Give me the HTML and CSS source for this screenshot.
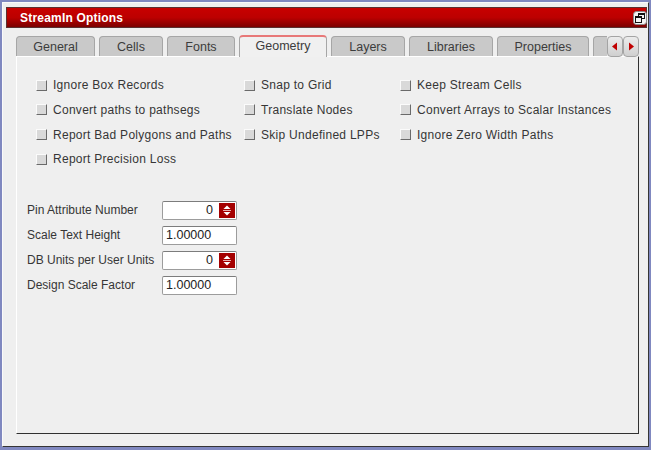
FILE: index.html
```html
<!DOCTYPE html>
<html>
<head>
<meta charset="utf-8">
<link rel="stylesheet" href="styles.css">
</head>
<body>
<div class="window">
  <div class="titlebar">
    <span class="title">StreamIn Options</span>
    <span class="restore">
      <svg width="14" height="14" viewBox="0 0 14 14">
        <rect x="0.5" y="0.5" width="13" height="13" rx="3" fill="#f4f4f4" stroke="#8a8a8a"/>
        <rect x="5.5" y="2.5" width="6" height="5" fill="none" stroke="#111"/>
        <rect x="5" y="2" width="7" height="2" fill="#111"/>
        <rect x="2.5" y="5.5" width="6" height="6" fill="#f4f4f4" stroke="#111"/>
        <rect x="2" y="5" width="7" height="2" fill="#111"/>
      </svg>
    </span>
  </div>
  <div class="content">
    <div class="tabs">
      <div class="tab t1">General</div>
      <div class="tab t2">Cells</div>
      <div class="tab t3">Fonts</div>
      <div class="tab t4 active">Geometry</div>
      <div class="tab t5">Layers</div>
      <div class="tab t6">Libraries</div>
      <div class="tab t7">Properties</div>
      <div class="tab partial"></div>
      <div class="arrows">
        <div class="arrow">
          <svg width="14" height="19" viewBox="0 0 14 19"><polygon points="4,9.5 9,5.5 9,13.5" fill="#c00000"/></svg>
        </div>
        <div class="arrow">
          <svg width="14" height="19" viewBox="0 0 14 19"><polygon points="10,9.5 5,5.5 5,13.5" fill="#c00000"/></svg>
        </div>
      </div>
    </div>
    <div class="panel">
      <div class="checks">
        <label class="check"><span class="box"></span>Ignore Box Records</label>
        <label class="check"><span class="box"></span>Snap to Grid</label>
        <label class="check"><span class="box"></span>Keep Stream Cells</label>
        <label class="check"><span class="box"></span>Convert paths to pathsegs</label>
        <label class="check"><span class="box"></span>Translate Nodes</label>
        <label class="check"><span class="box"></span>Convert Arrays to Scalar Instances</label>
        <label class="check"><span class="box"></span>Report Bad Polygons and Paths</label>
        <label class="check"><span class="box"></span>Skip Undefined LPPs</label>
        <label class="check"><span class="box"></span>Ignore Zero Width Paths</label>
        <label class="check"><span class="box"></span>Report Precision Loss</label>
      </div>
      <div class="fields">
        <span class="label">Pin Attribute Number</span>
        <div class="input spin"><span class="val">0</span><span class="spinner"><svg width="16" height="15" viewBox="0 0 16 15"><rect width="16" height="15" fill="#a40000"/><polygon points="4.5,6 11.5,6 8,2.5" fill="#fff"/><line x1="4" y1="7.5" x2="12" y2="7.5" stroke="#e8b0b0" stroke-width="1"/><polygon points="4.5,9 11.5,9 8,12.5" fill="#fff"/></svg></span></div>
        <span class="label">Scale Text Height</span>
        <div class="input">1.00000</div>
        <span class="label">DB Units per User Units</span>
        <div class="input spin"><span class="val">0</span><span class="spinner"><svg width="16" height="15" viewBox="0 0 16 15"><rect width="16" height="15" fill="#a40000"/><polygon points="4.5,6 11.5,6 8,2.5" fill="#fff"/><line x1="4" y1="7.5" x2="12" y2="7.5" stroke="#e8b0b0" stroke-width="1"/><polygon points="4.5,9 11.5,9 8,12.5" fill="#fff"/></svg></span></div>
        <span class="label">Design Scale Factor</span>
        <div class="input">1.00000</div>
      </div>
    </div>
  </div>
</div>
</body>
</html>
```
FILE: styles.css
```css
html, body {
  margin: 0;
  padding: 0;
}
body {
  background: #8088c0;
  width: 651px;
  height: 450px;
  overflow: hidden;
  font-family: "Liberation Sans", Arial, sans-serif;
  font-size: 12px;
  color: #363636;
}
.window {
  margin: 2px 0 0 2px;
  width: 647px;
  height: 445px;
  box-sizing: border-box;
  background: #efefef;
  border: 1px solid;
  border-color: #fafafa #353535 #353535 #fafafa;
  padding: 4px 1px 0 3px;
  display: flex;
  flex-direction: column;
}
.titlebar {
  height: 21px;
  box-sizing: border-box;
  border: 1px solid #5a3030;
  background: linear-gradient(#c80000 0%, #bc0000 50%, #7c0000 100%);
  display: flex;
  align-items: center;
  justify-content: space-between;
  padding: 0 0 0 13px;
}
.title {
  color: #fff;
  font-weight: bold;
  font-size: 12px;
  letter-spacing: 0.2px;
}
.restore {
  display: flex;
  margin-right: -1px;
}
.content {
  padding: 8px 0 0 10px;
}
.tabs {
  display: flex;
  align-items: flex-end;
  gap: 4px;
  height: 20px;
  position: relative;
  z-index: 1;
}
.tab {
  height: 20px;
  box-sizing: border-box;
  border: 1px solid #a6a6a6;
  border-bottom: none;
  border-radius: 4px 4px 0 0;
  background: #c9c9c9;
  text-align: center;
  line-height: 20px;
  color: #3c3c3c;
  font-size: 12.5px;
}
.t1 { width: 79px; }
.t2 { width: 64px; }
.t3 { width: 68px; }
.t4 { width: 88px; }
.t5 { width: 74px; }
.t6 { width: 84px; }
.t7 { width: 92px; }
.tab.active {
  height: 22px;
  margin-bottom: -1px;
  background: #f0f0f0;
  border-top: 2px solid #e87878;
  line-height: 19px;
}
.tab.partial {
  width: 14px;
  border-right: none;
  border-radius: 4px 0 0 0;
}
.arrows {
  display: flex;
  margin-left: -4px;
  margin-bottom: -1px;
}
.arrow {
  width: 16px;
  height: 21px;
  box-sizing: border-box;
  border: 1px solid #a4a4a4;
  border-radius: 4px;
  background: linear-gradient(#ececec, #cfcfcf);
  display: flex;
}
.panel {
  width: 623px;
  height: 378px;
  box-sizing: border-box;
  border: 1px solid;
  border-color: #ffffff #303030 #303030 #ffffff;
  padding-top: 16px;
}
.checks {
  margin-left: 19px;
  display: grid;
  grid-template-columns: 208px 156px auto;
  grid-auto-rows: 24.67px;
  align-items: center;
}
.check {
  display: flex;
  align-items: center;
  gap: 6px;
  white-space: nowrap;
  letter-spacing: 0.28px;
}
.box {
  width: 11px;
  height: 11px;
  box-sizing: border-box;
  border: 1px solid;
  border-color: #fbfbfb #6a6a6a #6a6a6a #fbfbfb;
  background: #d9d9d9;
  flex: none;
}
.fields {
  margin: 26px 0 0 10px;
  display: grid;
  grid-template-columns: 135px 75px;
  grid-auto-rows: 25px;
  align-items: center;
}
.label {
  white-space: nowrap;
}
.input {
  height: 19px;
  box-sizing: border-box;
  border: 1px solid #9c9c9c;
  border-top-color: #7c7c7c;
  border-radius: 2px;
  background: #fff;
  display: flex;
  align-items: center;
  padding-left: 3px;
  color: #222;
  font-size: 12.5px;
}
.input.spin {
  justify-content: flex-end;
  padding-right: 1px;
}
.val {
  margin-right: 6px;
}
.spinner {
  display: flex;
}
```
